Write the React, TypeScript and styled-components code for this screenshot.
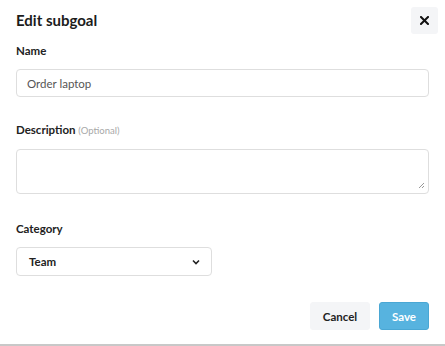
import React from "react";
import styled, { createGlobalStyle } from "styled-components";

const Global = createGlobalStyle`
  html, body { margin: 0; padding: 0; background: #fff; }
  body { font-family: Lato, "Open Sans", "Liberation Sans", sans-serif; color: #222; }
  * { box-sizing: border-box; }
`;

const Modal = styled.div`
  width: 445px;
  height: 346px;
  background: #fff;
  display: flex;
  flex-direction: column;
  border-bottom: 2px solid #c8c8c8;
`;

const Header = styled.div`
  display: flex;
  align-items: center;
  justify-content: space-between;
  padding: 6px 7px 0 16px;
  height: 34px;
`;

const Title = styled.h2`
  margin: 0;
  font-size: 15px;
  line-height: 18px;
  font-weight: 700;
  color: #1c1c1c;
`;

const CloseButton = styled.button`
  width: 27px;
  height: 27px;
  border: none;
  border-radius: 3px;
  background: #f4f5f7;
  display: flex;
  align-items: center;
  justify-content: center;
  padding: 0;
`;

const Body = styled.div`
  padding: 0 16px;
  display: flex;
  flex-direction: column;
`;

const Label = styled.div<{ $top: number }>`
  margin-top: ${(p) => p.$top}px;
  font-size: 11.5px;
  font-weight: 700;
  color: #222;
  line-height: 15px;
`;

const Optional = styled.span`
  font-size: 9.5px;
  line-height: 1;
  font-weight: 400;
  color: #a8a8a8;
`;

const TextInput = styled.div`
  margin-top: 11px;
  height: 28px;
  border: 1px solid #dedede;
  border-radius: 4px;
  display: flex;
  align-items: center;
  padding-left: 10px;
  font-size: 11.5px;
  color: #555;
`;

const TextArea = styled.div`
  margin-top: 12px;
  height: 45px;
  border: 1px solid #dedede;
  border-radius: 4px;
  position: relative;
`;

const Grip = styled.svg`
  position: absolute;
  right: 3px;
  bottom: 4px;
`;

const Select = styled.div`
  margin-top: 11px;
  width: 196px;
  height: 29px;
  border: 1px solid #dedede;
  border-radius: 4px;
  display: flex;
  align-items: center;
  justify-content: space-between;
  padding: 0 11px 0 12px;
  font-size: 11.5px;
  font-weight: 700;
  color: #222;
`;

const Footer = styled.div`
  display: flex;
  justify-content: flex-end;
  gap: 9px;
  padding: 26px 16px 0;
`;

const Button = styled.button<{ $primary?: boolean }>`
  height: 28px;
  border-radius: 3px;
  font-family: inherit;
  font-size: 11.5px;
  font-weight: 700;
  padding: 0;
  width: ${(p) => (p.$primary ? 50 : 60)}px;
  border: 1px solid ${(p) => (p.$primary ? "#4aa7d4" : "#f4f5f7")};
  background: ${(p) => (p.$primary ? "#57b3df" : "#f4f5f7")};
  color: ${(p) => (p.$primary ? "#fff" : "#222")};
`;

const Spacer = styled.div`
  flex: 1;
`;

export default function App() {
  return (
    <>
      <Global />
      <Modal>
        <Header>
          <Title>Edit subgoal</Title>
          <CloseButton aria-label="Close">
            <svg width="9" height="9" viewBox="0 0 9 9">
              <path d="M1 1L8 8M8 1L1 8" stroke="#111" strokeWidth="2" strokeLinecap="square" />
            </svg>
          </CloseButton>
        </Header>
        <Body>
          <Label $top={9}>Name</Label>
          <TextInput>Order laptop</TextInput>
          <Label $top={25}>
            Description <Optional>(Optional)</Optional>
          </Label>
          <TextArea>
            <Grip width="7" height="7" viewBox="0 0 7 7">
              <path d="M6 1L1 6M6 4L4 6" stroke="#999" strokeWidth="1" />
            </Grip>
          </TextArea>
          <Label $top={27}>Category</Label>
          <Select>
            <span>Team</span>
            <svg width="8" height="6" viewBox="0 0 8 6">
              <path d="M1 1.5L4 4.5L7 1.5" stroke="#222" strokeWidth="1.6" fill="none" />
            </svg>
          </Select>
        </Body>
        <Footer>
          <Button>Cancel</Button>
          <Button $primary>Save</Button>
        </Footer>
        <Spacer />
      </Modal>
    </>
  );
}
